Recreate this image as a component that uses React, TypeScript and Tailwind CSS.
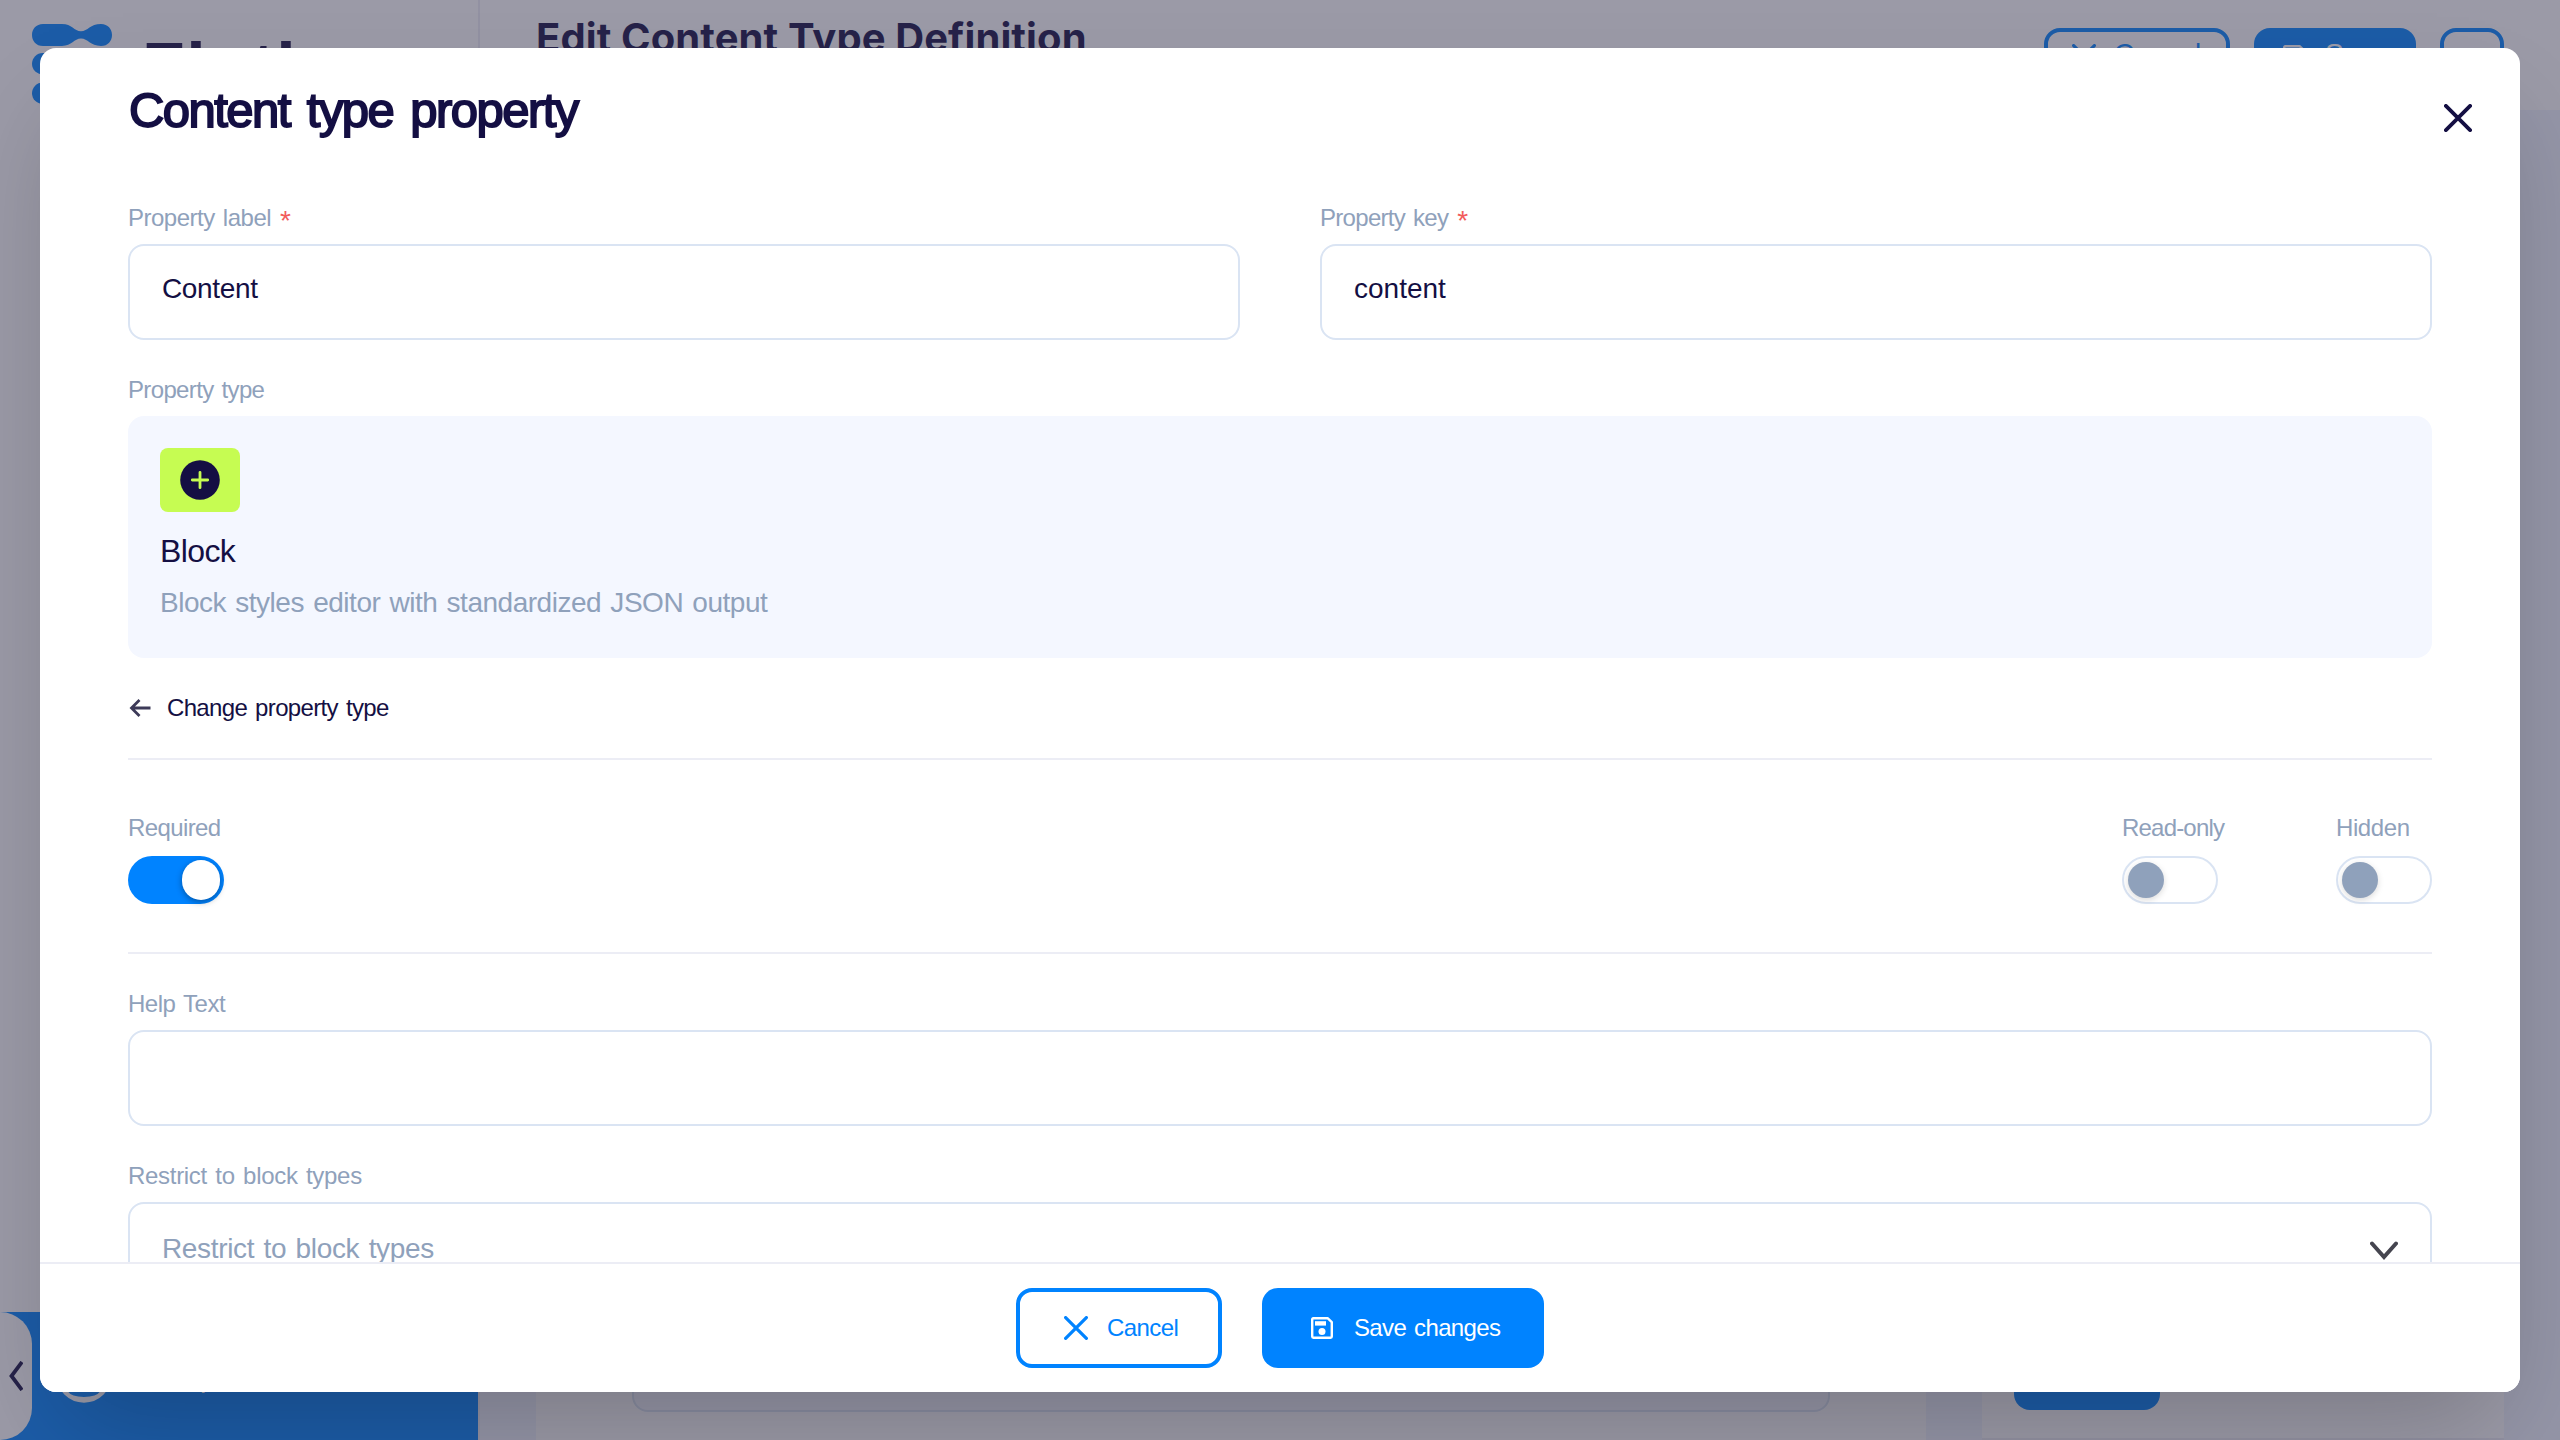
import type { ReactNode } from "react";

function CrossIcon({ className }: { className: string }) {
  return (
    <svg viewBox="0 0 28 28" className={className} fill="none" stroke="currentColor" strokeWidth="3.8" strokeLinecap="round">
      <path d="M1.9 1.9 26.1 26.1M26.1 1.9 1.9 26.1" />
    </svg>
  );
}

function SaveIcon({ className }: { className: string }) {
  return (
    <svg viewBox="0 0 22 22" className={className} fill="none">
      <path d="M2.2 1.2H16.6L20.8 5.2V19.6A1.2 1.2 0 0 1 19.6 20.8H2.4A1.2 1.2 0 0 1 1.2 19.6V2.2A1 1 0 0 1 2.2 1.2Z" stroke="currentColor" strokeWidth="2.4" strokeLinejoin="round" />
      <path d="M4 4.2H15V8.6H4Z" fill="currentColor" />
      <circle cx="11" cy="14.6" r="3.5" fill="currentColor" />
    </svg>
  );
}

function Label({ children, spacing, required }: { children: ReactNode; spacing: string; required?: boolean }) {
  return (
    <div className="flex h-8 text-[24px] leading-8 whitespace-nowrap text-[#8fa1bb]">
      <span className={spacing}>{children}</span>
      {required && <span className="ml-[9px] text-[28px] leading-[37px] text-[#f25c5c]">*</span>}
    </div>
  );
}

function Field({ children }: { children?: ReactNode }) {
  return (
    <div className="mt-[10px] flex h-24 justify-between rounded-2xl border-2 border-[#dae4f3] bg-white px-8 text-[28px] text-[#140f43]">
      {children}
    </div>
  );
}

function ToggleOff() {
  return (
    <div className="mt-3 flex h-12 w-24 items-center rounded-full border-2 border-[#dae4f3] px-1">
      <div className="size-9 rounded-full bg-[#8fa1bb] shadow-[0_2px_6px_rgba(0,0,0,0.15)]" />
    </div>
  );
}

function Backdrop() {
  return (
    <div className="flex h-full w-full bg-[#f0f4ff]">
      <aside className="flex w-[480px] shrink-0 flex-col justify-between border-r-2 border-[#ecedf5] bg-white">
        <div className="flex items-start pt-6 pl-8">
          <svg viewBox="0 0 80 80" className="size-20 shrink-0" fill="#0083ff">
            <path d="M11 0H30C40 0 42 7.2 49 7.2C56 7.2 58 0 69 0C76 0 80 5 80 11C80 17 76 22 69 22C58 22 56 14.6 49 14.6C42 14.6 40 22 30 22H11C4 22 0 17 0 11C0 5 4 0 11 0Z" />
            <rect y="29" width="60" height="21.5" rx="10.7" />
            <rect y="58.5" width="34" height="21.5" rx="10.7" />
          </svg>
          <span className="mt-1 ml-[30px] text-[70px] leading-[80px] font-bold tracking-[1.5px] text-[#140f43]">Flotiq</span>
        </div>
        <div className="flex h-32 items-center bg-[#0083ff] text-white">
          <div className="flex h-32 w-8 items-center justify-center rounded-r-[32px] bg-white text-[#140f43]">
            <svg viewBox="0 0 14 30" className="h-[30px] w-[14px]" fill="none" stroke="currentColor" strokeWidth="3.8">
              <path d="M13 1 2.5 15 13 29" />
            </svg>
          </div>
          <svg viewBox="0 0 56 56" className="mb-[3px] ml-6 size-14" fill="none" stroke="currentColor" strokeWidth="3.5">
            <circle cx="28" cy="28" r="26" />
            <circle cx="28" cy="21" r="8" />
            <path d="M9 46C12 38 20 36 28 36C36 36 44 38 47 46M10 45C16 54 40 54 46 45" />
          </svg>
          <span className="mt-1 ml-[46px] text-[28px] leading-8">Help</span>
        </div>
      </aside>
      <main className="flex flex-1 flex-col">
        <header className="flex h-[110px] shrink-0 items-start justify-between bg-white pr-14 pl-14">
          <h1 className="mt-[13px] font-['Inter'] text-[40px] leading-[50px] font-bold tracking-[0.1px] whitespace-nowrap text-[#140f43]">Edit Content Type Definition</h1>
          <div className="mt-7 flex gap-6 text-[28px] leading-[36px]">
            <div className="flex h-16 w-[186px] items-start gap-[18px] rounded-2xl border-4 border-[#0083ff] pt-1 pl-6 text-[#0083ff]">
              <CrossIcon className="mt-2 size-6" />
              <span>Cancel</span>
            </div>
            <div className="flex h-16 w-[162px] items-start gap-5 rounded-2xl bg-[#0083ff] pt-2 pl-[29px] text-white">
              <SaveIcon className="mt-[9px] size-[22px]" />
              <span>Save</span>
            </div>
            <div className="h-16 w-16 rounded-2xl border-4 border-[#0083ff]" />
          </div>
        </header>
        <div className="flex flex-1 gap-14 px-14">
          <section className="flex w-[1390px] flex-col bg-white px-24">
            <div className="h-[1302px] rounded-2xl border-2 border-[#dae4f3] bg-[#f4f7ff]" />
          </section>
          <section className="flex-1 border-b-2 border-[#ecedf5] bg-white px-8">
            <div className="h-[1300px] pt-[1220px]">
              <div className="h-20 w-[146px] rounded-2xl bg-[#0083ff]" />
            </div>
          </section>
        </div>
      </main>
    </div>
  );
}

export default function App() {
  return (
    <div className="relative h-[1440px] w-[2560px] overflow-hidden font-['Liberation_Sans',Arial,sans-serif]">
      <Backdrop />
      <div className="absolute inset-0 flex items-center justify-center bg-[#383650]/50">
        <div className="relative flex h-[1344px] w-[2480px] flex-col overflow-hidden rounded-2xl bg-white shadow-[0_50px_100px_-24px_rgba(0,0,0,0.22)]">
          <div className="min-h-0 flex-1 overflow-hidden px-[88px]">
            <h2 className="mt-8 ml-px text-[49px] leading-[60px] tracking-[-1.55px] [word-spacing:5px] text-[#140f43] [-webkit-text-stroke:1.9px_#140f43]">Content type property</h2>

            <div className="mt-[62px] grid grid-cols-2 gap-20">
              <div>
                <Label spacing="tracking-[-0.5px] [word-spacing:2px]" required>Property label</Label>
                <Field><span className="mt-[25px] leading-9 tracking-[-0.35px]">Content</span></Field>
              </div>
              <div>
                <Label spacing="tracking-[-0.7px] [word-spacing:2px]" required>Property key</Label>
                <Field><span className="mt-[25px] leading-9">content</span></Field>
              </div>
            </div>

            <div className="mt-[34px]">
              <Label spacing="tracking-[-0.65px] [word-spacing:2px]">Property type</Label>
              <div className="mt-[10px] h-[242px] rounded-2xl bg-[#f4f7ff] p-8">
                <div className="flex h-16 w-20 items-center justify-center rounded-lg bg-[#c6fc52]">
                  <svg viewBox="0 0 40 40" className="size-10">
                    <circle cx="20" cy="20" r="19.8" fill="#140f43" />
                    <path d="M20 12.3V27.7M12.3 20H27.7" stroke="#c6fc52" strokeWidth="2.8" strokeLinecap="round" />
                  </svg>
                </div>
                <p className="mt-[19px] text-[32px] leading-10 tracking-[-0.6px] text-[#140f43]">Block</p>
                <p className="mt-[14px] text-[28px] leading-9 tracking-[-0.48px] [word-spacing:1.9px] text-[#8fa1bb]">Block styles editor with standardized JSON output</p>
              </div>
            </div>

            <div className="mt-[34px] flex h-8 items-center text-[24px] leading-8 text-[#140f43]">
              <svg viewBox="0 0 22 18" className="ml-px h-[18px] w-[22px]" fill="none" stroke="#3d3a58" strokeWidth="2.8">
                <path d="M10.5 1 2.5 9 10.5 17M2.5 9H21.5" />
              </svg>
              <span className="ml-4 tracking-[-0.66px] [word-spacing:2px]">Change property type</span>
            </div>

            <div className="mt-[34px] border-t-2 border-[#ecedf5]" />

            <div className="mt-[52px] flex justify-between">
              <div>
                <Label spacing="tracking-[-0.6px]">Required</Label>
                <div className="mt-3 flex h-12 w-24 items-center justify-end rounded-full bg-[#0083ff] pr-1">
                  <div className="h-10 w-[38px] rounded-full bg-white shadow-[0_2px_6px_rgba(0,0,0,0.35)]" />
                </div>
              </div>
              <div className="flex gap-[118px]">
                <div className="w-24">
                  <Label spacing="tracking-[-0.8px]">Read-only</Label>
                  <ToggleOff />
                </div>
                <div className="w-24">
                  <Label spacing="tracking-[-0.4px]">Hidden</Label>
                  <ToggleOff />
                </div>
              </div>
            </div>

            <div className="mt-12 border-t-2 border-[#ecedf5]" />

            <div className="mt-[34px]">
              <Label spacing="tracking-[-0.5px] [word-spacing:2px]">Help Text</Label>
              <Field />
            </div>

            <div className="mt-[34px]">
              <Label spacing="tracking-[-0.3px] [word-spacing:2px]">Restrict to block types</Label>
              <Field>
                <span className="mt-[27px] leading-9 tracking-[-0.35px] [word-spacing:2px] text-[#8fa1bb]">Restrict to block types</span>
                <svg viewBox="0 0 28 20" className="mt-9 h-5 w-7" fill="none" stroke="#45454f" strokeWidth="4" strokeLinecap="round">
                  <path d="M2 3.5 14 17 26 3.5" />
                </svg>
              </Field>
            </div>
          </div>

          <CrossIcon className="absolute top-14 right-12 size-7 text-[#140f43]" />

          <div className="flex h-[130px] shrink-0 justify-center gap-10 border-t-2 border-[#ecedf5] bg-white pt-6 text-[24px] leading-8">
            <button className="flex h-20 w-[206px] items-center rounded-2xl border-4 border-[#0083ff] pl-11 text-[#0083ff]">
              <CrossIcon className="size-6" />
              <span className="ml-[19px] tracking-[-0.6px]">Cancel</span>
            </button>
            <button className="flex h-20 w-[282px] items-center rounded-2xl bg-[#0083ff] pl-[49px] text-white">
              <SaveIcon className="size-[22px]" />
              <span className="ml-[21px] tracking-[-0.65px] [word-spacing:2px]">Save changes</span>
            </button>
          </div>
        </div>
      </div>
    </div>
  );
}
